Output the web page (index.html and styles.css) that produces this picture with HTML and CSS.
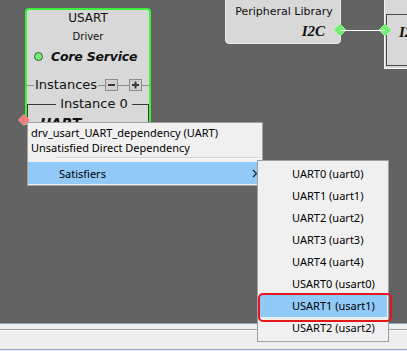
FILE: index.html
```html
<!DOCTYPE html>
<html>
<head>
<meta charset="utf-8">
<link rel="stylesheet" href="styles.css">
</head>
<body>
<div class="canvas">
  <div class="node node-plib">
    <div class="plib-kind">Peripheral Library</div>
    <div class="plib-name">I2C</div>
  </div>
  <div class="node node-i2c">
    <div class="i2c-box"><span class="i2c-name">I2C</span></div>
  </div>
  <svg class="wires" width="407" height="60" viewBox="0 0 407 60">
    <path d="M340 24 L346 30 L340 36 L334 30 Z" fill="#6fee6f" stroke="#9af59a" stroke-width="1"/>
    <path d="M385 24 L391 30 L385 36 L379 30 Z" fill="#6fee6f" stroke="#9af59a" stroke-width="1"/>
    <line x1="340" y1="30.5" x2="385" y2="30.5" stroke="#ffffff" stroke-width="1"/>
  </svg>
  <div class="node node-usart">
    <div class="n-title">USART</div>
    <div class="n-kind">Driver</div>
    <div class="n-group"><span class="dot"></span><span class="n-group-name">Core Service</span></div>
    <div class="n-inst">
      <span class="rule r1"></span>
      <span class="n-inst-label">Instances</span>
      <span class="rule r2"></span>
      <span class="btn"><svg width="11" height="10" viewBox="0 0 11 10"><rect x="2" y="4" width="7" height="2" fill="#3a3a3a"/></svg></span>
      <span class="rule r3"></span>
      <span class="btn"><svg width="11" height="10" viewBox="0 0 11 10"><rect x="2" y="4" width="7" height="2" fill="#3a3a3a"/><rect x="4.5" y="1.5" width="2" height="7" fill="#3a3a3a"/></svg></span>
      <span class="rule r4"></span>
    </div>
    <fieldset class="inst">
      <legend>Instance 0</legend>
      <div class="inst-name">UART</div>
    </fieldset>
  </div>
  <svg class="dep" width="14" height="14" viewBox="0 0 14 14">
    <path d="M7 1.5 L12.5 7 L7 12.5 L1.5 7 Z" fill="#f27b7b" stroke="#f5a0a0" stroke-width="1"/>
  </svg>

  <div class="ctx">
    <div class="ctx-head">drv_usart_UART_dependency (UART)</div>
    <div class="ctx-head">Unsatisfied Direct Dependency</div>
    <div class="ctx-sep"></div>
    <div class="ctx-item hl">
      <span>Satisfiers</span>
      <svg class="chev" width="6" height="9" viewBox="0 0 6 9"><path d="M1 1 L4.5 4.5 L1 8" fill="none" stroke="#222" stroke-width="1.2"/></svg>
    </div>
  </div>

  <div class="sub">
    <div class="sub-item">UART0 (uart0)</div>
    <div class="sub-item">UART1 (uart1)</div>
    <div class="sub-item">UART2 (uart2)</div>
    <div class="sub-item">UART3 (uart3)</div>
    <div class="sub-item">UART4 (uart4)</div>
    <div class="sub-item">USART0 (usart0)</div>
    <div class="sub-item hl">USART1 (usart1)</div>
    <div class="sub-item">USART2 (usart2)</div>
  </div>
  <div class="mark"></div>
</div>
<div class="status">
  <div class="status-top"></div>
  <div class="status-main"></div>
</div>
</body>
</html>
```
FILE: styles.css
```css
html, body {
  margin: 0;
  padding: 0;
}
body {
  width: 407px;
  height: 351px;
  overflow: hidden;
  background: #f0f0f0;
  font-family: "DejaVu Sans", sans-serif;
  color: #111;
}
.canvas {
  position: relative;
  height: 323px;
  background: #636363;
  border-bottom: 1px solid #8aa4bd;
  overflow: visible;
}
.node {
  position: absolute;
  box-sizing: border-box;
  background: #d8d8d8;
}

/* Peripheral library node */
.node-plib {
  left: 225px;
  top: -10px;
  width: 116px;
  height: 54px;
  border: 1px solid #ececec;
  border-radius: 4px;
  padding-top: 14px;
}
.plib-kind {
  font-size: 11px;
  line-height: 14px;
  text-align: center;
  margin-left: 2px;
}
.plib-name {
  font-family: "Liberation Serif", serif;
  font-weight: bold;
  font-style: italic;
  font-size: 15px;
  line-height: 18px;
  text-align: right;
  padding-right: 15px;
  margin-top: 3px;
}

/* partial I2C node on the right */
.node-i2c {
  left: 384px;
  top: -10px;
  width: 40px;
  height: 79px;
  border-left: 1px solid #f4f4f4;
  border-bottom: 1px solid #f4f4f4;
  padding: 24px 0 2px 1px;
}
.i2c-box {
  height: 100%;
  box-sizing: border-box;
  border: 1px solid #4a4a4a;
  padding: 7px 0 0 12px;
}
.i2c-name {
  font-family: "Liberation Serif", serif;
  font-weight: bold;
  font-style: italic;
  font-size: 15px;
  line-height: 18px;
}

.wires {
  position: absolute;
  left: 0;
  top: 0;
}

/* USART node */
.node-usart {
  left: 25px;
  top: 8px;
  width: 126px;
  height: 117px;
  border: 2px solid #3bef3b;
  border-bottom: 0;
  border-radius: 4px 4px 0 0;
  overflow: hidden;
}
.n-title {
  font-size: 12px;
  line-height: 16px;
  text-align: center;
}
.n-kind {
  font-size: 10px;
  line-height: 14px;
  margin-top: 4px;
  text-align: center;
}
.n-group {
  display: flex;
  align-items: center;
  margin-top: 4px;
  height: 16px;
  padding-left: 7px;
}
.dot {
  width: 7px;
  height: 7px;
  border-radius: 50%;
  background: #74ee74;
  border: 1px solid #3a5a3a;
  margin-right: 8px;
}
.n-group-name {
  font-weight: bold;
  font-style: italic;
  font-size: 12.5px;
  letter-spacing: -0.2px;
}
.n-inst {
  display: flex;
  align-items: center;
  height: 16px;
  margin-top: 13px;
  margin-left: -2px;
}
.rule {
  height: 1px;
  background: #8a8a8a;
}
.r1 { width: 9px; }
.r2 { width: 7px; }
.r3 { width: 11px; }
.r4 { flex: 1; }
.n-inst-label {
  font-size: 13px;
  line-height: 16px;
  padding: 0 1px;
}
.btn {
  display: flex;
  box-sizing: border-box;
  width: 13px;
  height: 12px;
  border: 1px solid #8c8c8c;
  background: #d0d0d0;
}
.inst {
  margin: 3px 0 0;
  padding: 0 0 0 12px;
  border: 1px solid #3c3c3c;
  min-width: 0;
  height: 100px;
}
.inst legend {
  margin: 0 auto;
  padding: 0 4px;
  font-size: 13px;
  line-height: 16px;
}
.inst-name {
  font-weight: bold;
  font-style: italic;
  font-size: 14px;
  line-height: 16px;
  margin-top: 3px;
}
.dep {
  position: absolute;
  left: 17px;
  top: 113px;
}

/* context menu */
.ctx {
  position: absolute;
  left: 27px;
  top: 122px;
  width: 236px;
  box-sizing: border-box;
  background: #f0f0f0;
  border: 1px solid #a0a0a0;
  padding: 2px 0 1px;
  font-family: "Noto Sans", sans-serif;
  font-size: 11px;
  color: #000;
}
.ctx-head {
  line-height: 15px;
  padding-left: 3px;
  white-space: nowrap;
}
.ctx-sep {
  margin: 2px 2px 3px 28px;
  height: 1px;
  background: #d4d4d4;
  border-bottom: 1px solid #fbfbfb;
}
.ctx-item {
  display: flex;
  align-items: center;
  justify-content: space-between;
  height: 22px;
  padding: 0 4px 0 31px;
}
.hl {
  background: #91c9f7;
}

/* submenu */
.sub {
  position: absolute;
  left: 257px;
  top: 160px;
  width: 132px;
  box-sizing: border-box;
  background: #f0f0f0;
  border: 1px solid #a0a0a0;
  padding: 2px 0;
  font-family: "Noto Sans", sans-serif;
  font-size: 11px;
  color: #000;
}
.sub-item {
  height: 22px;
  line-height: 22px;
  margin: 0 1px 0 2px;
  padding-left: 32px;
  white-space: nowrap;
}
.mark {
  position: absolute;
  left: 258px;
  top: 293px;
  width: 134px;
  height: 29px;
  box-sizing: border-box;
  border: 2px solid #e3151d;
  border-radius: 5px;
}

/* bottom panel */
.status-top {
  height: 5px;
  background: #f0f0f0;
  border-bottom: 1px solid #a0a0a0;
}
.status-main {
  height: 18px;
  background: #eeeeee;
  border-top: 1px solid #fafafa;
  border-bottom: 1px solid #8aa4bd;
}
```
